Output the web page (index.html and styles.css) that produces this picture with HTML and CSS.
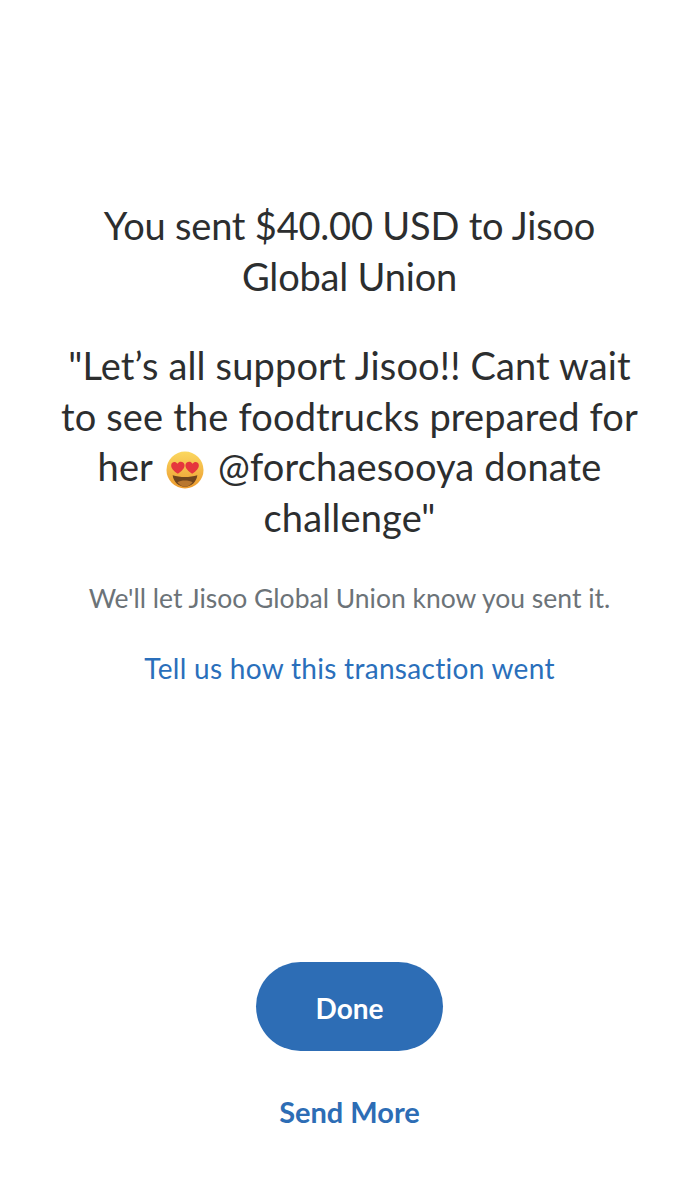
FILE: index.html
```html
<!DOCTYPE html>
<html lang="en">
<head>
<meta charset="utf-8">
<title>Sent</title>
<link rel="stylesheet" href="styles.css">
</head>
<body>
<main class="screen">
  <section class="message">
    <h1 class="headline">You sent $40.00 USD to Jisoo Global Union</h1>
    <p class="note">"Let’s all support Jisoo!! Cant wait to see the foodtrucks prepared for her
      <svg class="emoji" viewBox="0 0 40 40" aria-hidden="true">
        <defs>
          <linearGradient id="face" x1="0" y1="0" x2="0" y2="1">
            <stop offset="0" stop-color="#fbd860"/>
            <stop offset="1" stop-color="#ec9a2e"/>
          </linearGradient>
        </defs>
        <circle cx="20" cy="20" r="19.500" fill="url(#face)"/>
        <path d="M7 25.500c8 2.500 18 2.500 26 0-1 7-6 12-13 12S8 32.500 7 25.500z" fill="#6f451d"/>
        <path d="M12 33c4-2.500 12-2.500 16 0-2 2.800-5 4.500-8 4.500S14 35.800 12 33z" fill="#b9772f"/>
        <path d="M12.500 24C8 21 5 18 5.500 14.500 6 11.500 10 10.500 12 13.500 14 10 19 11 19.500 14.500 20 18 16.500 21.500 12.500 24z" fill="#e5363d"/>
        <path d="M27.500 24C32 21 35 18 34.500 14.500 34 11.500 30 10.500 28 13.500 26 10 21 11 20.500 14.500 20 18 23.500 21.500 27.500 24z" fill="#e5363d"/>
      </svg>
      @forchaesooya donate challenge"</p>
    <p class="hint">We'll let Jisoo Global Union know you sent it.</p>
    <a class="feedback" href="#">Tell us how this transaction went</a>
  </section>
  <section class="actions">
    <a class="done" href="#">Done</a>
    <a class="more" href="#">Send More</a>
  </section>
</main>
</body>
</html>
```
FILE: styles.css
```css
html, body { margin: 0; padding: 0; background: #fff; }
.screen {
  height: 1200px;
  box-sizing: border-box;
  padding: 200px 50px 0;
  display: flex;
  flex-direction: column;
  font-family: Lato, "Open Sans", sans-serif;
  font-variant-ligatures: none;
  text-align: center;
}
.message { display: flex; flex-direction: column; align-items: center; }
.headline, .note {
  margin: 0;
  font-size: 38px;
  line-height: 50.500px;
  font-weight: 400;
  color: #2c2e2f;
}
.headline { width: 520px; letter-spacing: -0.2px; }
.note { margin: 39px -10px 0; width: 590px; letter-spacing: 0.15px; }
.emoji { width: 38px; height: 38px; margin: 0 4px; vertical-align: -8px; }
.hint { margin: 36px 0 0; font-size: 26.500px; line-height: 40px; color: #6c7378; }
.feedback { margin-top: 30px; font-size: 28px; line-height: 40px; letter-spacing: 0.3px; color: #2a6fbb; text-decoration: none; }
.actions { margin-top: 274px; display: flex; flex-direction: column; align-items: center; }
.done {
  width: 187px; height: 89px; border-radius: 45px; background: #2d6db5; color: #fff;
  font-size: 28px; font-weight: 700; line-height: 92px; text-decoration: none;
}
.more { margin-top: 41px; font-size: 29px; font-weight: 700; line-height: 40px; color: #2d6db5; text-decoration: none; }
```
